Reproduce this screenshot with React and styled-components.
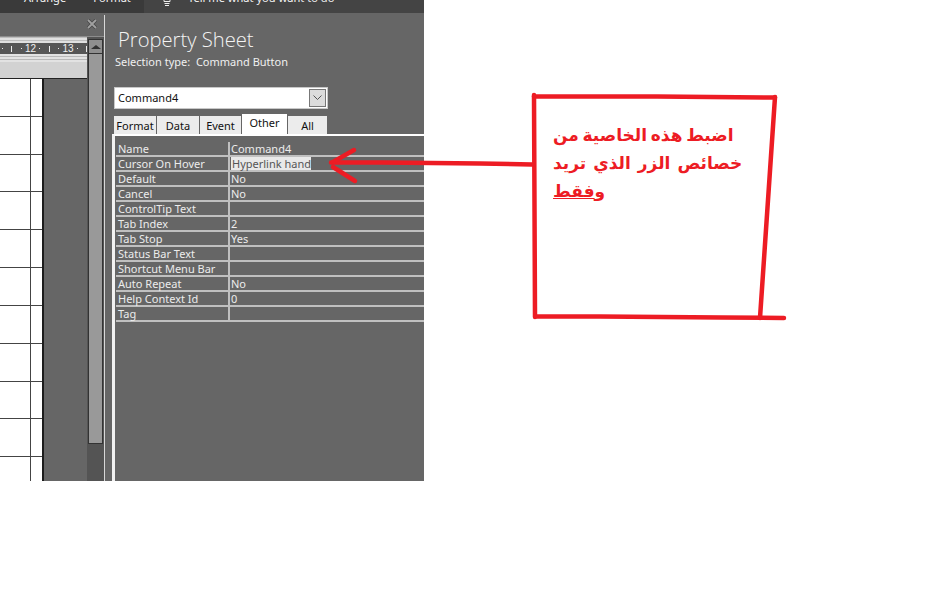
import React from "react";
import styled, { createGlobalStyle } from "styled-components";

const Global = createGlobalStyle`
  html, body { margin: 0; padding: 0; background: #fff; }
  body { font-family: "Noto Sans", "DejaVu Sans", sans-serif; }
`;

const Page = styled.div`
  position: relative;
  width: 939px;
  height: 611px;
  background: #fff;
  overflow: hidden;
`;
const AppWindow = styled.div`
  width: 424px;
  height: 481px;
  display: flex;
  flex-direction: column;
  background: #666;
  overflow: hidden;
`;
const Ribbon = styled.div`
  height: 13px;
  flex: none;
  display: flex;
  background: #444;
  color: #f2f2f2;
  font-size: 11.1px;
  line-height: 13px;
`;
const RibbonTabs = styled.div`
  width: 144px;
  flex: none;
  display: flex;
  background: #3a3a3a;
  padding-left: 24px;
  gap: 27px;
  box-sizing: border-box;
`;
const RibbonTab = styled.span`
  margin-top: -9px;
`;
const TellMe = styled.div`
  display: flex;
  padding-left: 19px;
  gap: 17px;
`;
const TellText = styled.span`
  margin-top: -9px;
`;
const Body = styled.div`
  flex: 1;
  display: flex;
  min-height: 0;
`;
const DesignPane = styled.div`
  width: 104px;
  flex: none;
  display: flex;
  flex-direction: column;
`;
const PaneHeader = styled.div`
  height: 24px;
  flex: none;
  display: flex;
  justify-content: flex-end;
  align-items: flex-start;
  padding: 6px 7px 0 0;
  border-bottom: 1px solid #8c8c8c;
  box-sizing: border-box;
`;
const DesignBody = styled.div`
  flex: 1;
  display: flex;
  min-height: 0;
`;
const Canvas = styled.div`
  width: 87px;
  flex: none;
  display: flex;
  flex-direction: column;
`;
const RulerTop = styled.div`
  height: 6px;
  flex: none;
  background: repeating-linear-gradient(#bdbdbd 0 1px, #e0e0e0 1px 3px);
`;
const Ruler = styled.div`
  height: 11px;
  flex: none;
  background: #565656;
  display: flex;
  align-items: center;
  overflow: hidden;
  color: #f0f0f0;
  font-size: 10px;
  font-family: "Liberation Sans", sans-serif;
`;
const RulerCell = styled.span`
  width: 9.4px;
  flex: none;
  display: flex;
  justify-content: center;
  align-items: center;
  white-space: nowrap;
  &:first-child { margin-left: -2.4px; }
`;
const Tick = styled.i`
  width: 1px;
  height: ${(p) => (p.$long ? 6 : 1)}px;
  background: #ececec;
`;
const RulerBottom = styled.div`
  height: 8px;
  flex: none;
  background: repeating-linear-gradient(#e2e2e2 0 2px, #b8b8b8 2px 3px);
`;
const SectionBar = styled.div`
  height: 17px;
  flex: none;
  box-sizing: border-box;
  background: #d2d2d2;
  border-bottom: 1px solid #222;
`;
const CanvasInner = styled.div`
  flex: 1;
  display: flex;
  min-height: 0;
`;
const FormRows = styled.div`
  width: 44px;
  flex: none;
  box-sizing: border-box;
  overflow: hidden;
  background: #fff;
  border-right: 2px solid #1c1c1c;
`;
const FormRow = styled.div`
  height: 37.83px;
  box-sizing: border-box;
  display: flex;
  justify-content: flex-end;
  padding-right: 11px;
  border-bottom: 1px solid #444;
`;
const FormLine = styled.div`
  width: 1.5px;
  background: #444;
`;
const ScrollBar = styled.div`
  width: 17px;
  flex: none;
  display: flex;
  flex-direction: column;
  background: #545454;
  padding: 2px 1px 0;
  box-sizing: border-box;
`;
const ScrollBtn = styled.div`
  height: 15px;
  flex: none;
  background: #8f8f8f;
  border: 1px solid #333;
  box-sizing: border-box;
  display: flex;
  align-items: center;
  justify-content: center;
`;
const Arrow = styled.div`
  width: 0;
  height: 0;
  border-left: 5px solid transparent;
  border-right: 5px solid transparent;
  border-bottom: 4px solid #333;
`;
const Thumb = styled.div`
  height: 390px;
  flex: none;
  background: #999;
  border: 1px solid #333;
  border-top: 0;
  box-sizing: border-box;
`;
const Divider = styled.div`
  width: 1px;
  flex: none;
  margin-top: 2px;
  background: #d8d8d8;
`;
const SheetPane = styled.div`
  flex: 1;
  min-width: 0;
  display: flex;
  flex-direction: column;
  padding: 13px 0 0 7px;
  overflow: hidden;
`;
const Title = styled.div`
  margin-left: 6px;
  font-family: "Open Sans", sans-serif;
  font-weight: 300;
  font-size: 20.2px;
  line-height: 27px;
  color: #f4f4f4;
  white-space: nowrap;
`;
const Selection = styled.div`
  margin: 1px 0 0 3px;
  font-size: 11px;
  line-height: 15px;
  color: #f0f0f0;
  white-space: pre;
`;
const Combo = styled.div`
  margin: 18px 0 0 2px;
  width: 214px;
  height: 22px;
  flex: none;
  box-sizing: border-box;
  background: #fff;
  border: 1px solid #c8c8c8;
  display: flex;
  align-items: center;
  justify-content: space-between;
  padding: 1px 1px 1px 3px;
  font-size: 11px;
  color: #111;
`;
const ComboText = styled.span`
  margin-top: -2px;
`;
const ComboBtn = styled.div`
  width: 17px;
  height: 18px;
  background: #dcdcdc;
  border: 1px solid #777;
  box-sizing: border-box;
  display: flex;
  align-items: center;
  justify-content: center;
`;
const Tabs = styled.div`
  margin: 5px 0 0 2px;
  height: 20px;
  flex: none;
  display: flex;
  align-items: flex-end;
`;
const TabItem = styled.div`
  width: ${(p) => p.$w}px;
  height: ${(p) => (p.$active ? 20 : 18)}px;
  flex: none;
  box-sizing: border-box;
  margin-right: 1px;
  background: ${(p) => (p.$active ? "#fff" : "#ececec")};
  color: #111;
  font-size: 11px;
  line-height: ${(p) => (p.$active ? 18 : 19)}px;
  text-align: center;
`;
const Sheet = styled.div`
  flex: 1;
  min-height: 0;
  border-top: 2px solid #fff;
  border-left: 3px solid #f2f2f2;
  padding: 6px 0 0 1px;
`;
const Row = styled.div`
  display: grid;
  grid-template-columns: 112px 1fr;
  column-gap: 2px;
  height: 15px;
  box-sizing: border-box;
  padding-bottom: 2px;
  background: #c0c0c0;
  font-size: 11px;
  line-height: 13px;
  color: #ececec;
`;
const Label = styled.div`
  padding-left: 2px;
  white-space: nowrap;
  background: #666;
`;
const Value = styled.div`
  padding-left: 1px;
  white-space: nowrap;
  background: #666;
`;
const Highlight = styled.span`
  display: inline-block;
  background: #e9e9e9;
  color: #555;
  padding: 0 0 0 1px;
  height: 13px;
`;
const Drawing = styled.svg`
  position: absolute;
  inset: 0;
  pointer-events: none;
`;
const Note = styled.div`
  position: absolute;
  left: 553px;
  top: 122px;
  width: 200px;
  color: #ed1c24;
  font-family: "Liberation Sans", "DejaVu Sans", sans-serif;
  font-weight: 700;
  font-size: 17px;
  line-height: 28px;
`;
const NoteLine = styled.div`
  white-space: nowrap;
  word-spacing: ${(p) => p.$spacing || 0}px;
`;
const Under = styled.span`
  text-decoration: underline;
`;

const rows = [
  ["Name", "Command4"],
  ["Cursor On Hover", "Hyperlink hand", true],
  ["Default", "No"],
  ["Cancel", "No"],
  ["ControlTip Text", ""],
  ["Tab Index", "2"],
  ["Tab Stop", "Yes"],
  ["Status Bar Text", ""],
  ["Shortcut Menu Bar", ""],
  ["Auto Repeat", "No"],
  ["Help Context Id", "0"],
  ["Tag", ""],
];
const ruler = ["d", "t", "d", "12", "d", "t", "d", "13", "d", "t"];
const tabs = [
  ["Format", 42],
  ["Data", 42],
  ["Event", 41],
  ["Other", 45, true],
  ["All", 39],
];

const Bulb = () => (
  <svg width="8" height="8" viewBox="0 0 8 8" fill="none" stroke="#eee" strokeWidth="1">
    <path d="M1 0v1.5h6V0M1.5 3.5h5M2 5.5h4" />
  </svg>
);
const CloseIcon = () => (
  <svg width="10" height="10" viewBox="0 0 10 10">
    <path d="M1 1l8 8M9 1l-8 8" stroke="#4a4a4a" strokeWidth="3.6" />
    <path d="M1 1l8 8M9 1l-8 8" stroke="#a0a0a0" strokeWidth="1.8" />
  </svg>
);
const Chevron = () => (
  <svg width="9" height="6" viewBox="0 0 9 6" fill="none" stroke="#555" strokeWidth="1">
    <path d="M.5 .5l4 4 4-4" />
  </svg>
);

export default function App() {
  return (
    <Page>
      <Global />
      <AppWindow>
        <Ribbon>
          <RibbonTabs>
            <RibbonTab>Arrange</RibbonTab>
            <RibbonTab>Format</RibbonTab>
          </RibbonTabs>
          <TellMe>
            <Bulb />
            <TellText>Tell me what you want to do</TellText>
          </TellMe>
        </Ribbon>
        <Body>
          <DesignPane>
            <PaneHeader>
              <CloseIcon />
            </PaneHeader>
            <DesignBody>
              <Canvas>
                <RulerTop />
                <Ruler>
                  {ruler.map((r, i) => (
                    <RulerCell key={i}>
                      {r === "d" ? <Tick /> : r === "t" ? <Tick $long /> : r}
                    </RulerCell>
                  ))}
                </Ruler>
                <RulerBottom />
                <SectionBar />
                <CanvasInner>
                  <FormRows>
                    {Array.from({ length: 11 }).map((_, i) => (
                      <FormRow key={i}>
                        <FormLine />
                      </FormRow>
                    ))}
                  </FormRows>
                </CanvasInner>
              </Canvas>
              <ScrollBar>
                <ScrollBtn>
                  <Arrow />
                </ScrollBtn>
                <Thumb />
              </ScrollBar>
            </DesignBody>
          </DesignPane>
          <Divider />
          <SheetPane>
            <Title>Property Sheet</Title>
            <Selection>Selection type:  Command Button</Selection>
            <Combo>
              <ComboText>Command4</ComboText>
              <ComboBtn>
                <Chevron />
              </ComboBtn>
            </Combo>
            <Tabs>
              {tabs.map(([t, w, a]) => (
                <TabItem key={t} $w={w} $active={a}>
                  {t}
                </TabItem>
              ))}
            </Tabs>
            <Sheet>
              {rows.map(([l, v, h]) => (
                <Row key={l}>
                  <Label>{l}</Label>
                  <Value>{h ? <Highlight>{v}</Highlight> : v}</Value>
                </Row>
              ))}
            </Sheet>
          </SheetPane>
        </Body>
      </AppWindow>

      <Drawing width="939" height="611" viewBox="0 0 939 611" fill="none" stroke="#ed1c24" strokeWidth="4.5" strokeLinecap="round">
        <path d="M534 95L535 317" />
        <path d="M534 96.5L657 96.5L775 97.5" />
        <path d="M775 97L760 318" />
        <path d="M537 316.5L600 316.5L722 317.5L784 318" />
        <path d="M331 162.5L381 162.5L480 163.5L532 164.5" />
        <path d="M333 162L354 150" />
        <path d="M333 167L355 181" />
      </Drawing>
      <Note>
        <NoteLine $spacing={-1}>اضبط هذه الخاصية من</NoteLine>
        <NoteLine $spacing={2.3}>خصائص الزر الذي تريد</NoteLine>
        <NoteLine>
          و<Under>فقط</Under>
        </NoteLine>
      </Note>
    </Page>
  );
}
